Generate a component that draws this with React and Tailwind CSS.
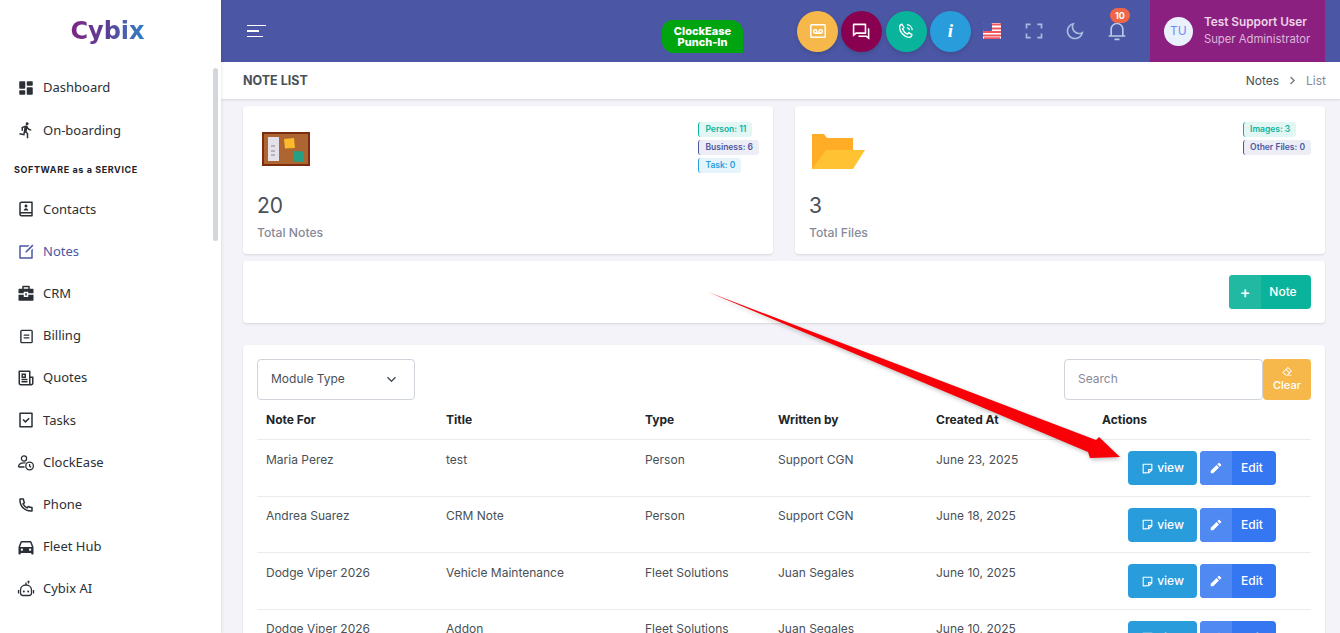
import React from 'react';
import {
  RiDashboardFill, RiRunLine, RiContactsBook2Line, RiEditBoxLine, RiBriefcase4Fill, RiNewspaperLine,
  RiTaskLine, RiPhoneLine, RiCarFill, RiQuestionAnswerLine, RiFullscreenLine, RiMoonLine,
  RiNotification3Line, RiStickyNoteLine, RiPencilFill, RiEraserLine, RiArrowRightSLine, RiArrowDownSLine,
} from 'react-icons/ri';

const BillIcon = () => (
  <svg viewBox="0 0 16 16" className="h-[15px] w-[15px]" fill="none" stroke="currentColor" strokeWidth="1.5">
    <rect x="2" y="1.5" width="12" height="13" rx="1" />
    <path d="M5 6.5h6M5 9.5h6" />
  </svg>
);

const ClockUserIcon = () => (
  <svg viewBox="0 0 18 18" className="h-[18px] w-[18px]" fill="none" stroke="currentColor" strokeWidth="1.3">
    <circle cx="7" cy="4.5" r="2.6" />
    <path d="M1.5 13c0-2.8 2.5-4.2 5.5-4.2.6 0 1.2 0 1.7.2M1.5 13h6" />
    <circle cx="12.6" cy="12" r="3.8" />
    <path d="M12.6 10v2.2l1.5 1" />
  </svg>
);

const RobotIcon = () => (
  <svg viewBox="0 0 18 18" className="h-[18px] w-[18px]" fill="none" stroke="currentColor" strokeWidth="1.3">
    <path d="M3.500 10c0-3 2.400-5 5.500-5s5.500 2 5.500 5v3c0 1.500-1 2.500-2.500 2.500H6c-1.500 0-2.500-1-2.500-2.500z" />
    <path d="M9 5V2.500M11.500 3.500V1.500M10.500 1.500h2M1.500 10v3.500M16.500 10v3.500" />
    <circle cx="6.800" cy="11.500" r="1" fill="currentColor" stroke="none" />
    <circle cx="11.200" cy="11.500" r="1" fill="currentColor" stroke="none" />
  </svg>
);

const VoicemailIcon = () => (
  <svg viewBox="0 0 20 20" className="h-[18px] w-[18px]" fill="none" stroke="currentColor" strokeWidth="1.6">
    <rect x="2" y="3" width="16" height="14" rx="1" />
    <circle cx="7" cy="10.5" r="1.9" />
    <circle cx="13" cy="10.5" r="1.9" />
    <path d="M7 12.4h6" />
  </svg>
);

const CallWavesIcon = () => (
  <svg viewBox="0 0 20 20" className="h-[18px] w-[18px]" fill="none" stroke="currentColor" strokeWidth="1.5">
    <path d="M5.5 2.5l2.2 3.6-1.5 1.6c.9 2.4 2.8 4.5 5.4 5.7l1.6-1.5 3.4 2.1c-.4 2-1.8 3.2-3.4 3C7.500 16.300 2.800 11 2.900 5.700c0-1.500 1-2.800 2.600-3.200z" />
    <path d="M11 6.200c1.500.2 2.700 1.300 2.900 2.900M11 3c3.200.2 5.700 2.800 6 6" />
  </svg>
);

const FlagIcon = () => (
  <svg viewBox="0 0 18 18" className="h-[18px] w-[18px]">
    <rect y="1" width="18" height="16" rx="1.5" fill="#fff" />
    <path d="M0 2.500h18M0 6.500h18M0 10h18M0 13.500h18M1 16.200h16" stroke="#f0565f" strokeWidth="1.800" />
    <rect y="1" width="9" height="8" rx="1" fill="#4b5aa8" />
  </svg>
);

const CorkBoard = () => (
  <svg viewBox="0 0 48 34" className="ml-[5px] h-[34px] w-12">
    <rect width="48" height="34" fill="#7c2d0e" />
    <rect x="2" y="2" width="44" height="30" fill="#ad6632" />
    <rect x="6" y="5" width="11" height="24" fill="#e4e2e8" />
    <path d="M9 14h4M9 19h4M9 23h4" stroke="#70707c" strokeWidth="0.8" />
    <path d="M22 7l10-1 1 10-10 0.500z" fill="#fdb92c" />
    <path d="M32 19l10 0.500-0.500 10.500-10-0.500z" fill="#25a085" />
  </svg>
);

const Folder = () => (
  <svg viewBox="0 0 53 35" className="ml-[3px] mt-[2px] h-[35px] w-[53px]">
    <path d="M0 0h12l3 4h26v31H0z" fill="#ffad26" />
    <path d="M14 16h39L41 35H0z" fill="#ffc233" />
  </svg>
);

const navTop = [
  { label: 'Dashboard', icon: <RiDashboardFill size={18} /> },
  { label: 'On-boarding', icon: <RiRunLine size={18} /> },
];

const navMain = [
  { label: 'Contacts', icon: <RiContactsBook2Line size={18} /> },
  { label: 'Notes', icon: <RiEditBoxLine size={18} />, active: true },
  { label: 'CRM', icon: <RiBriefcase4Fill size={18} /> },
  { label: 'Billing', icon: <BillIcon /> },
  { label: 'Quotes', icon: <RiNewspaperLine size={18} /> },
  { label: 'Tasks', icon: <RiTaskLine size={18} /> },
  { label: 'ClockEase', icon: <ClockUserIcon /> },
  { label: 'Phone', icon: <RiPhoneLine size={18} /> },
  { label: 'Fleet Hub', icon: <RiCarFill size={18} /> },
  { label: 'Cybix AI', icon: <RobotIcon /> },
];

const rows = [
  ['Maria Perez', 'test', 'Person', 'Support CGN', 'June 23, 2025'],
  ['Andrea Suarez', 'CRM Note', 'Person', 'Support CGN', 'June 18, 2025'],
  ['Dodge Viper 2026', 'Vehicle Maintenance', 'Fleet Solutions', 'Juan Segales', 'June 10, 2025'],
  ['Dodge Viper 2026', 'Addon', 'Fleet Solutions', 'Juan Segales', 'June 10, 2025'],
];

const tableCols = 'grid grid-cols-[180px_199px_133px_158px_166px_1fr] pl-[9px]';

function NavItem({ item }) {
  return (
    <div className={`flex h-[42.2px] items-center gap-[8px] pl-[17px] text-[13px] ${item.active ? 'text-[#4b57a4]' : 'text-[#2b3036]'}`}>
      <span className="flex w-[18px] justify-center">{item.icon}</span>
      {item.label}
    </div>
  );
}

function Sidebar() {
  return (
    <aside className="relative w-[221px] shrink-0 bg-white font-['Noto_Sans',sans-serif] shadow-[1px_0_3px_rgba(0,0,0,0.08)]">
      <div className="flex h-[67px] items-center justify-center pb-[5px] pr-[6px]">
        <span className="bg-gradient-to-r from-[#7d2382] via-[#5a3f97] to-[#1f82c4] bg-clip-text font-['DejaVu_Sans',sans-serif] text-[24px] font-bold leading-[30px] text-transparent">
          Cybix
        </span>
      </div>
      {navTop.map((item) => <NavItem key={item.label} item={item} />)}
      <div className="flex h-[37px] items-center pl-[14px] font-['Inter',sans-serif] text-[9px] font-bold tracking-[0.6px] text-[#1f2328]">
        SOFTWARE as a SERVICE
      </div>
      {navMain.map((item) => <NavItem key={item.label} item={item} />)}
      <div className="absolute left-[213px] top-[68px] h-[173px] w-[5px] rounded-full bg-[#d3d6db]" />
    </aside>
  );
}

function RoundBtn({ color, children }) {
  return (
    <div className={`flex h-[41px] w-[41px] items-center justify-center rounded-full text-white shadow-[0_2px_4px_rgba(0,0,0,0.15)] ${color}`}>
      {children}
    </div>
  );
}

function Header() {
  return (
    <header className="flex h-[62px] shrink-0 items-center bg-[#4b57a4] pr-[15px]">
      <div className="ml-[26px] flex w-[19px] flex-col gap-[4px]">
        <span className="h-[1.5px] w-[19px] bg-white" />
        <span className="h-[1.5px] w-[12px] bg-white" />
        <span className="h-[1.5px] w-[16px] bg-white" />
      </div>
      <div className="ml-[396px] mt-[11px] flex h-[33px] w-[81px] flex-col items-center justify-center rounded-[10px_12px_0_12px] bg-[#00a40f] text-center font-['Inter',sans-serif] text-[11px] font-extrabold leading-[11px] text-white">
        <span>ClockEase</span>
        <span>Punch-In</span>
      </div>
      <div className="ml-[54px] flex items-center gap-[3.3px]">
        <RoundBtn color="bg-[#f7b84b]"><VoicemailIcon /></RoundBtn>
        <RoundBtn color="bg-[#8a0050]"><RiQuestionAnswerLine size={19} /></RoundBtn>
        <RoundBtn color="bg-[#0ab39c]"><CallWavesIcon /></RoundBtn>
        <RoundBtn color="bg-[#299cdb]">
          <span className="font-['Liberation_Serif',serif] text-[19px] font-bold italic">i</span>
        </RoundBtn>
      </div>
      <div className="ml-[12px]"><FlagIcon /></div>
      <div className="ml-[23px] text-[#a6bde0]"><RiFullscreenLine size={20} /></div>
      <div className="ml-[21px] text-[#a6bde0]"><RiMoonLine size={20} /></div>
      <div className="relative ml-[22px] text-[#b6cbe4]">
        <RiNotification3Line size={20} />
        <span className="absolute left-[3px] top-[-13px] flex h-[15px] w-[20px] items-center justify-center rounded-full bg-[#f06548] font-['Inter',sans-serif] text-[9px] font-bold text-white">
          10
        </span>
      </div>
      <div className="ml-[23px] flex h-full w-[175px] items-center gap-[11px] bg-[#8c2081] pl-[14px] font-['Inter',sans-serif]">
        <div className="flex h-[29px] w-[29px] items-center justify-center rounded-full bg-[#e9f1fd] text-[12px] text-[#6f8cf0]">TU</div>
        <div className="leading-none">
          <div className="text-[11.8px] font-semibold text-[#ecd4e8]">Test Support User</div>
          <div className="mt-[5px] text-[11.3px] text-[#dcb8d8]">Super Administrator</div>
        </div>
      </div>
    </header>
  );
}

function Badge({ color, children }) {
  return (
    <span className={`flex h-[15px] items-center whitespace-nowrap rounded-[3px] border-l px-[6px] text-[8.500px] font-semibold ${color}`}>
      {children}
    </span>
  );
}

function StatCard({ icon, value, label, badges }) {
  return (
    <div className="flex h-[148px] flex-1 justify-between rounded-[4px] bg-white px-[14px] pt-4 shadow-[0_1px_2px_rgba(56,65,74,0.15)]">
      <div className="flex flex-col items-start">
        <div className="mt-[10px] flex h-[37px] items-start">{icon}</div>
        <div className="mt-[26px] text-[21px] leading-none text-[#495057]">{value}</div>
        <div className="mt-[11px] text-[12.2px] font-medium leading-none text-[#878a99]">{label}</div>
      </div>
      <div className="flex flex-col items-start gap-[3px]">{badges}</div>
    </div>
  );
}

function ActionButtons() {
  return (
    <div className="ml-[26px] mt-[-1.5px] flex gap-[3px] text-[12px] font-medium text-white">
      <button className="flex h-[34px] w-[69px] items-center justify-center gap-[3px] rounded-[4px] bg-[#299cdb]">
        <RiStickyNoteLine size={13} /> view
      </button>
      <button className="flex h-[34px] w-[76px] overflow-hidden rounded-[4px] bg-[#3577f1]">
        <span className="flex h-full w-[32px] items-center justify-center bg-[#5189f3]"><RiPencilFill size={14} /></span>
        <span className="flex h-full flex-1 items-center justify-center pr-[4px]">Edit</span>
      </button>
    </div>
  );
}

function NotesTable() {
  return (
    <div className="mt-[22px] rounded-[4px] bg-white p-[14px] shadow-[0_1px_2px_rgba(56,65,74,0.15)]">
      <div className="flex items-center justify-between">
        <div className="flex h-[41px] w-[158px] items-center justify-between rounded-[4px] border border-[#ced4da] pb-[1px] pl-[13px] pr-[14px] text-[12px] text-[#495057]">
          Module Type
          <RiArrowDownSLine size={17} />
        </div>
        <div className="flex">
          <div className="flex h-[41px] w-[199px] items-center rounded-[4px] border border-[#ced4da] pb-[1px] pl-[13px] text-[12px] text-[#878a99]">
            Search
          </div>
          <button className="flex h-[41px] w-[48px] flex-col items-center justify-center rounded-[4px] bg-[#f7b84b] text-[11px] font-medium leading-[16px] text-white">
            <RiEraserLine size={11} />
            Clear
          </button>
        </div>
      </div>
      <div className={`${tableCols} h-[40px] items-center border-b border-[#e9ebec] text-[12px] font-bold text-[#212529]`}>
        <div>Note For</div>
        <div>Title</div>
        <div>Type</div>
        <div>Written by</div>
        <div>Created At</div>
        <div>Actions</div>
      </div>
      {rows.map((r, i) => (
        <div key={i} className={`${tableCols} h-[56.500px] border-b border-[#e9ebec] pt-[12.5px] text-[12px] leading-[14px] text-[#495057]`}>
          {r.map((c, j) => <div key={j}>{c}</div>)}
          <ActionButtons />
        </div>
      ))}
    </div>
  );
}

export default function App() {
  return (
    <div className="relative flex h-[633px] w-[1340px] overflow-hidden bg-[#f3f3f9] font-['Inter',sans-serif]">
      <Sidebar />
      <main className="flex min-w-0 flex-1 flex-col">
        <Header />
        <div className="flex h-[37px] shrink-0 items-center justify-between bg-white pl-[22px] pr-[14px] shadow-[0_1px_2px_rgba(56,65,74,0.15)]">
          <span className="pt-[1px] text-[12.500px] font-bold text-[#495057]">NOTE LIST</span>
          <div className="flex items-center gap-[6px] text-[12px] text-[#495057]">
            Notes
            <RiArrowRightSLine size={15} className="text-[#6b7280]" />
            <span className="text-[#878a99]">List</span>
          </div>
        </div>
        <div className="pl-[22px] pr-[15px] pt-[7px]">
          <div className="flex gap-[22px]">
            <StatCard
              icon={<CorkBoard />}
              value="20"
              label="Total Notes"
              badges={
                <>
                  <Badge color="border-[#0ab39c] bg-[#e2f6f3] text-[#0ab39c]">Person: 11</Badge>
                  <Badge color="border-[#4b57a4] bg-[#ecedf5] text-[#4b57a4]">Business: 6</Badge>
                  <Badge color="border-[#299cdb] bg-[#e5f3fb] text-[#299cdb]">Task: 0</Badge>
                </>
              }
            />
            <StatCard
              icon={<Folder />}
              value="3"
              label="Total Files"
              badges={
                <>
                  <Badge color="border-[#0ab39c] bg-[#e2f6f3] text-[#0ab39c]">Images: 3</Badge>
                  <Badge color="border-[#4b57a4] bg-[#ecedf5] text-[#4b57a4]">Other Files: 0</Badge>
                </>
              }
            />
          </div>
          <div className="mt-[7px] flex h-[62px] items-center justify-end rounded-[4px] bg-white pr-[14px] shadow-[0_1px_2px_rgba(56,65,74,0.15)]">
            <button className="flex h-[34px] w-[82px] overflow-hidden rounded-[4px] bg-[#0ab39c] text-[12px] font-medium text-white">
              <span className="flex h-full w-[32px] items-center justify-center bg-[#22b9a3] text-[16px]">+</span>
              <span className="flex h-full flex-1 items-center justify-center pr-[6px]">Note</span>
            </button>
          </div>
          <NotesTable />
        </div>
      </main>
      <svg viewBox="0 0 420 175" className="pointer-events-none absolute left-[705px] top-[288px] h-[175px] w-[420px] drop-shadow-[1px_2px_2px_rgba(0,0,0,0.25)]">
        <polygon points="3,4 391,152 394,149 415,169 385,170 383,164" fill="#f90008" />
      </svg>
    </div>
  );
}
